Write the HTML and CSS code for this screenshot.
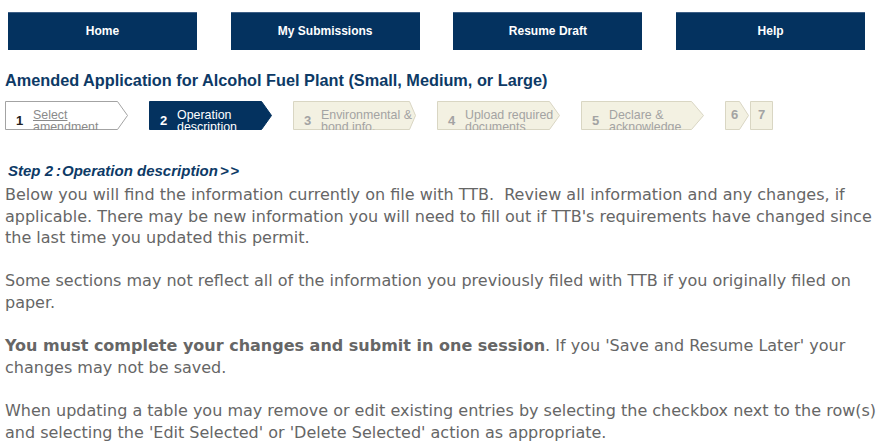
FILE: index.html
```html
<!DOCTYPE html>
<html lang="en">
<head>
<meta charset="utf-8">
<title>Amended Application for Alcohol Fuel Plant</title>
<link rel="stylesheet" href="styles.css">
</head>
<body>
<nav class="topnav">
  <a class="navbtn" href="#">Home</a>
  <a class="navbtn" href="#">My Submissions</a>
  <a class="navbtn" href="#">Resume Draft</a>
  <a class="navbtn" href="#">Help</a>
</nav>
<main class="page">
  <h1 class="title">Amended Application for Alcohol Fuel Plant (Small, Medium, or Large)</h1>
  <ol class="steps">
    <li class="step done">
      <svg class="shape" viewBox="0 0 123 29" preserveAspectRatio="none"><polygon points="0.5,0.5 112.5,0.5 122.5,14.5 112.5,28.5 0.5,28.5"/></svg>
      <div class="step-in"><span class="num">1</span><a class="lbl" href="#">Select amendment</a></div>
    </li>
    <li class="step current">
      <svg class="shape" viewBox="0 0 123 29" preserveAspectRatio="none"><polygon points="0.5,0.5 112.5,0.5 122.5,14.5 112.5,28.5 0.5,28.5"/></svg>
      <div class="step-in"><span class="num">2</span><span class="lbl">Operation description</span></div>
    </li>
    <li class="step todo">
      <svg class="shape" viewBox="0 0 123 29" preserveAspectRatio="none"><polygon points="0.5,0.5 116.5,0.5 122.5,14.5 116.5,28.5 0.5,28.5"/></svg>
      <div class="step-in"><span class="num">3</span><span class="lbl">Environmental &amp; bond info.</span></div>
    </li>
    <li class="step todo">
      <svg class="shape" viewBox="0 0 123 29" preserveAspectRatio="none"><polygon points="0.5,0.5 112.5,0.5 122.5,14.5 112.5,28.5 0.5,28.5"/></svg>
      <div class="step-in"><span class="num">4</span><span class="lbl">Upload required documents</span></div>
    </li>
    <li class="step todo">
      <svg class="shape" viewBox="0 0 123 29" preserveAspectRatio="none"><polygon points="0.5,0.5 110.5,0.5 122.5,14.5 110.5,28.5 0.5,28.5"/></svg>
      <div class="step-in"><span class="num">5</span><span class="lbl">Declare &amp; acknowledge</span></div>
    </li>
    <li class="step todo small">
      <svg class="shape" viewBox="0 0 24 29" preserveAspectRatio="none"><polygon points="0.5,0.5 14.5,0.5 23.5,14.5 14.5,28.5 0.5,28.5"/></svg>
      <div class="step-in"><span class="num">6</span></div>
    </li>
    <li class="step todo last">
      <svg class="shape" viewBox="0 0 23 29" preserveAspectRatio="none"><polygon points="0.5,0.5 22.5,0.5 22.5,28.5 0.5,28.5"/></svg>
      <div class="step-in"><span class="num">7</span></div>
    </li>
  </ol>
  <h2 class="step-title">Step 2<span class="colon">:</span>Operation description<span class="gt">&gt;&gt;</span></h2>
  <p class="intro">Below you will find the information currently on file with TTB.&nbsp; Review all information and any changes, if applicable. There may be new information you will need to fill out if TTB's requirements have changed since the last time you updated this permit.<br><br>Some sections may not reflect all of the information you previously filed with TTB if you originally filed on paper.<br><br><strong>You must complete your changes and submit in one session</strong>. If you 'Save and Resume Later' your changes may not be saved.<br><br>When updating a table you may remove or edit existing entries by selecting the checkbox next to the row(s) and selecting the 'Edit Selected' or 'Delete Selected' action as appropriate.</p>
</main>
</body>
</html>
```

FILE: styles.css
```css
html, body {
  margin: 0;
  padding: 0;
  background: #ffffff;
}

body {
  font-family: "Liberation Sans", Arial, sans-serif;
}

.topnav {
  display: flex;
  gap: 33.7px;
  padding: 12px 0 0 8px;
}

.navbtn {
  width: 189px;
  height: 38px;
  box-sizing: border-box;
  background: #04325f;
  border-top: 1px solid #3d5f86;
  color: #ffffff;
  font-weight: bold;
  font-size: 12px;
  text-decoration: none;
  display: flex;
  align-items: center;
  justify-content: center;
  padding-bottom: 2px;
}

.page {
  padding: 0 8px 0 5px;
}

.title {
  margin: 20px 0 0;
  font-size: 16.3px;
  line-height: 20px;
  font-weight: bold;
  color: #0d3a66;
}

.steps {
  list-style: none;
  margin: 11px 0 0;
  padding: 0;
  display: flex;
}

.step {
  position: relative;
  width: 123px;
  height: 29px;
  margin-right: 21px;
  overflow: hidden;
  flex: none;
}

.step.small {
  width: 24px;
  margin-right: 1px;
}

.step.last {
  width: 23px;
  margin-right: 0;
}

.shape {
  position: absolute;
  left: 0;
  top: 0;
  width: 100%;
  height: 100%;
}

.step-in {
  position: relative;
  display: flex;
  align-items: center;
  padding: 8px 0 0 11px;
}

.num {
  font-size: 13px;
  font-weight: bold;
  line-height: 12px;
  width: 17px;
  flex: none;
}

.lbl {
  font-size: 12.4px;
  line-height: 12px;
  flex: 1;
  min-width: 0;
}

.done polygon {
  fill: #ffffff;
  stroke: #a3a3a3;
}
.done .num { color: #222222; }
.done .lbl { color: #8a8a8a; text-decoration: underline; }

.current polygon {
  fill: #04325f;
  stroke: #04325f;
}
.current .num, .current .lbl { color: #ffffff; }

.todo polygon {
  fill: #f3f1e2;
  stroke: #d9d6c3;
}
.todo .num, .todo .lbl { color: #a3a3a3; }

.small .step-in { padding-left: 6px; }
.last .step-in { padding-left: 8px; }

.step-title {
  margin: 32px 0 0 3px;
  font-size: 15px;
  line-height: 18px;
  font-weight: bold;
  font-style: italic;
  color: #0d3a66;
}

.colon {
  margin: 0 1px 0 3px;
}

.gt {
  margin-left: 2px;
  letter-spacing: 1.5px;
}

.intro {
  margin: 4px 0 0;
  font-family: "DejaVu Sans", Verdana, sans-serif;
  font-size: 16px;
  line-height: 21.6px;
  color: #666666;
}

.intro strong {
  font-weight: bold;
}
```
